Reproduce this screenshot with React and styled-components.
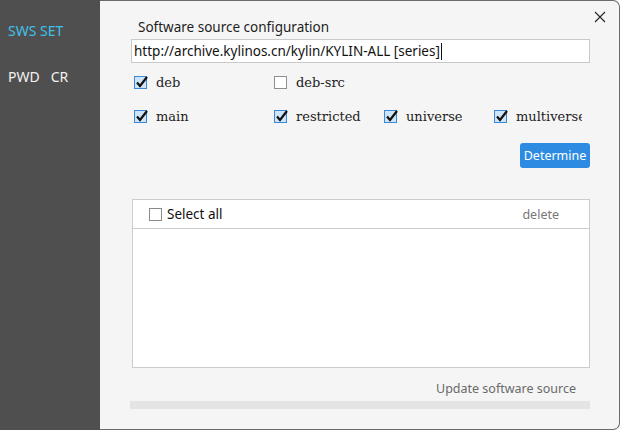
import React from "react";
import styled, { createGlobalStyle } from "styled-components";

const Global = createGlobalStyle`
  html, body { margin: 0; padding: 0; background: #ffffff; }
  body { font-family: "Noto Sans", "DejaVu Sans", sans-serif; }
  * { box-sizing: border-box; }
`;

const Window = styled.div`
  display: flex;
  width: 620px;
  height: 430px;
`;

const Sidebar = styled.nav`
  width: 100px;
  flex: none;
  background: #4f4f4f;
  display: flex;
  flex-direction: column;
  padding: 21px 0 0 8px;
  gap: 27px;
`;

const NavItem = styled.div`
  font-size: 14px;
  line-height: 19px;
  color: ${(p) => (p.$active ? "#3fc0ea" : "#f2f2f2")};
  white-space: pre;
`;

const Panel = styled.main`
  flex: 1;
  position: relative;
  background: #f5f5f5;
  border: 1px solid #6a6a6a;
  border-left: none;
  border-radius: 0 7px 7px 0;
  display: flex;
  flex-direction: column;
  padding: 0 29px 0 30px;
`;

const Close = styled.button`
  position: absolute;
  top: 9px;
  right: 12px;
  width: 14px;
  height: 14px;
  padding: 0;
  border: none;
  background: transparent;
  display: flex;
  align-items: center;
  justify-content: center;
`;

const Title = styled.div`
  margin-top: 17px;
  padding-left: 8px;
  font-size: 13.5px;
  line-height: 18px;
  color: #1e1e1e;
`;

const UrlInput = styled.div`
  margin-top: 3px;
  margin-left: 1px;
  height: 24px;
  background: #ffffff;
  border: 1px solid #c9c9c9;
  display: flex;
  align-items: center;
  padding-left: 2px;
  font-size: 13.5px;
  color: #111;
`;

const Caret = styled.span`
  display: inline-block;
  width: 1px;
  height: 17px;
  background: #111;
  margin-left: 1px;
`;

const CheckGrid = styled.div`
  display: grid;
  grid-template-columns: 140px 110px 110px 88px;
  padding-left: 4px;
  margin-top: ${(p) => p.$mt}px;
  height: 20px;
  align-items: center;
`;

const CheckItem = styled.label`
  display: flex;
  align-items: center;
  gap: 9px;
  overflow: hidden;
  white-space: nowrap;
  font-family: "DejaVu Serif", serif;
  font-size: 13px;
  color: #222;
`;

const Box = styled.span`
  position: relative;
  flex: none;
  width: 13px;
  height: 13px;
  border: 1px solid ${(p) => (p.$checked ? "#3a8bd6" : "#8e8e8e")};
  background: ${(p) => (p.$checked ? "#cfe4f7" : "#ffffff")};
`;

const Tick = styled.svg`
  position: absolute;
  left: 0px;
  top: -2px;
`;

const Check = ({ checked }) => (
  <Box $checked={checked}>
    {checked && (
      <Tick width="14" height="14" viewBox="0 0 14 14">
        <path d="M2 7.5 L5 11 L12 2" fill="none" stroke="#111" strokeWidth="2.2" />
      </Tick>
    )}
  </Box>
);

const ButtonRow = styled.div`
  display: flex;
  justify-content: flex-end;
  margin-top: 17px;
`;

const Primary = styled.button`
  width: 70px;
  height: 25px;
  border: none;
  border-radius: 3px;
  background: #2d8ce2;
  color: #ffffff;
  font-family: "Noto Sans", sans-serif;
  font-size: 12.5px;
  padding: 0;
`;

const ListBox = styled.section`
  margin-top: 31px;
  margin-left: 2px;
  height: 169px;
  background: #ffffff;
  border: 1px solid #cccccc;
  display: flex;
  flex-direction: column;
`;

const ListHeader = styled.div`
  height: 29px;
  border-bottom: 1px solid #cccccc;
  display: flex;
  align-items: center;
  padding: 0 30px 0 16px;
`;

const SelectAll = styled.label`
  display: flex;
  align-items: center;
  gap: 5px;
  font-size: 13.5px;
  color: #111;
`;

const SmallBox = styled.span`
  width: 13px;
  height: 13px;
  border: 1px solid #8a8a8a;
  background: #fff;
`;

const Delete = styled.span`
  margin-left: auto;
  font-size: 12.5px;
  color: #777;
`;

const StatusText = styled.div`
  margin-top: 12px;
  align-self: flex-end;
  padding-right: 14px;
  font-size: 12.5px;
  line-height: 17px;
  color: #6a6a6a;
`;

const Progress = styled.div`
  margin-top: 4px;
  height: 8px;
  background: #e4e4e4;
`;

export default function App() {
  return (
    <>
      <Global />
      <Window>
        <Sidebar>
          <NavItem $active>SWS SET</NavItem>
          <NavItem>{"PWD   CR"}</NavItem>
        </Sidebar>
        <Panel>
          <Close aria-label="close">
            <svg width="12" height="12" viewBox="0 0 12 12">
              <path d="M1 1 L11 11 M11 1 L1 11" stroke="#222" strokeWidth="1.1" />
            </svg>
          </Close>
          <Title>Software source configuration</Title>
          <UrlInput>
            http://archive.kylinos.cn/kylin/KYLIN-ALL [series]
            <Caret />
          </UrlInput>
          <CheckGrid $mt={9}>
            <CheckItem><Check checked />deb</CheckItem>
            <CheckItem><Check />deb-src</CheckItem>
          </CheckGrid>
          <CheckGrid $mt={14}>
            <CheckItem><Check checked />main</CheckItem>
            <CheckItem><Check checked />restricted</CheckItem>
            <CheckItem><Check checked />universe</CheckItem>
            <CheckItem><Check checked />multiverse</CheckItem>
          </CheckGrid>
          <ButtonRow>
            <Primary>Determine</Primary>
          </ButtonRow>
          <ListBox>
            <ListHeader>
              <SelectAll><SmallBox />Select all</SelectAll>
              <Delete>delete</Delete>
            </ListHeader>
          </ListBox>
          <StatusText>Update software source</StatusText>
          <Progress />
        </Panel>
      </Window>
    </>
  );
}
